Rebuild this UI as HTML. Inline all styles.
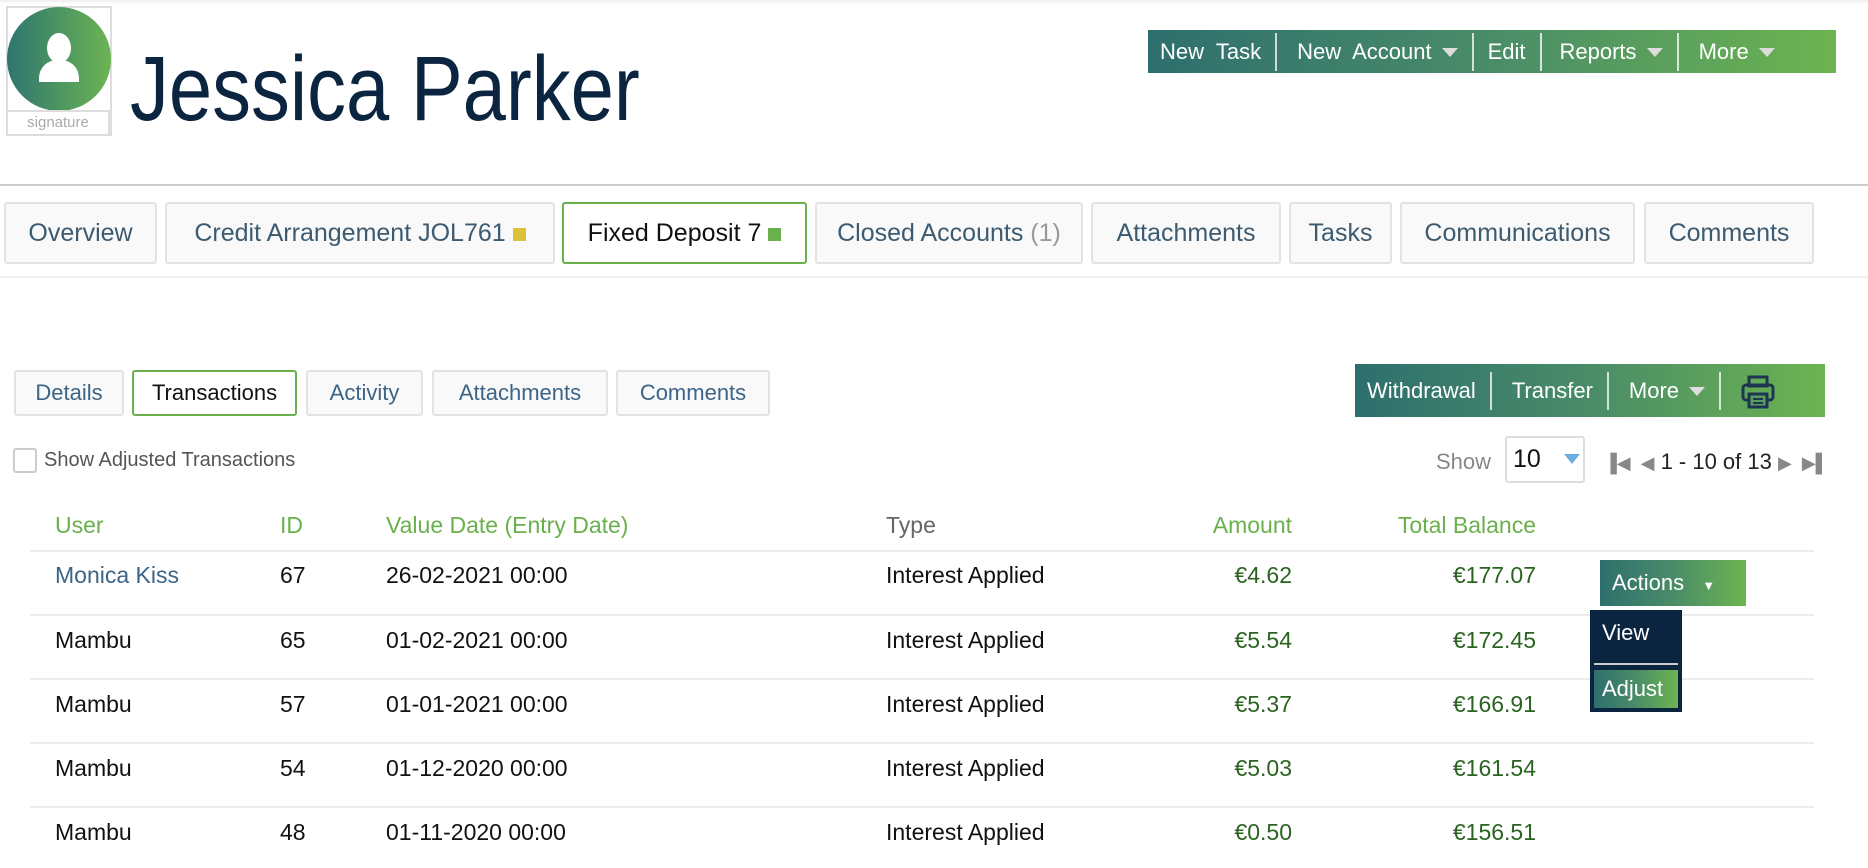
<!DOCTYPE html>
<html><head><meta charset="utf-8"><style>
*{box-sizing:border-box;margin:0;padding:0}
body{width:1868px;height:868px;background:#fff;font-family:"Liberation Sans",sans-serif;position:relative;overflow:hidden}
.a{position:absolute;white-space:nowrap}
.g{background:linear-gradient(90deg,#2e6f6e,#4a8c68 50%,#6cb450)}
.tab{position:absolute;top:202px;height:62px;border:2px solid #e3e3e3;border-radius:3px;background:#f9f9f9;color:#3c5a70;font-size:25px;line-height:58px;text-align:center}
.st{position:absolute;top:370px;height:46px;border:2px solid #e3e3e3;border-radius:3px;background:#f9f9f9;color:#3c6488;font-size:22px;line-height:42px;text-align:center}
.bar{display:flex;align-items:center;color:#fff}
.bar span{padding:0 14px;border-right:2px solid rgba(255,255,255,.75);line-height:38px}
.bar span:last-child{border-right:none}
.tri{display:inline-block;width:0;height:0;border-left:8px solid transparent;border-right:8px solid transparent;border-top:9px solid #ddd;margin-left:10px;vertical-align:middle}
.h{position:absolute;top:512px;font-size:23px;color:#6ab04c}
.c{position:absolute;font-size:23px;color:#111}
.r{text-align:right}
.amt{color:#2a6420}
.line{position:absolute;left:30px;width:1784px;height:2px;background:#ebebeb}
</style></head><body>
<div class="a" style="left:0;top:0;width:1868px;height:4px;background:linear-gradient(#eee,#fff)"></div>
<div class="a" style="left:6px;top:6px;width:106px;height:130px;border:2px solid #ddd"></div>
<div class="a" style="left:7px;top:7px;width:104px;height:104px;border-radius:50%;background:linear-gradient(90deg,#2e7570,#6cb452)"></div>
<div class="a" style="left:47px;top:33px;width:24px;height:30px;border-radius:50%;background:#fff"></div>
<div class="a" style="left:39px;top:60px;width:40px;height:22px;border-radius:18px 18px 0 0;background:#fff"></div>
<div class="a" style="left:6px;top:110px;width:104px;height:26px;border:2px solid #ddd;color:#aaa;font-size:15px;text-align:center;line-height:22px">signature</div>
<div class="a" style="left:130px;top:34px;font-size:92px;color:#0b2440;transform:scaleX(.845);transform-origin:left;line-height:110px">Jessica Parker</div>
<div class="a g bar" style="left:1148px;top:30px;width:688px;height:43px;font-size:22px;padding-left:0">
<span style="padding-left:12px">New&nbsp; Task</span><span style="padding-left:20px">New&nbsp; Account<i class="tri"></i></span><span>Edit</span><span style="padding-left:18px">Reports<i class="tri"></i></span><span style="padding-left:20px">More<i class="tri"></i></span>
</div>
<div class="a" style="left:0;top:184px;width:1868px;height:2px;background:#ccc"></div>
<div class="tab" style="left:4px;width:153px">Overview</div>
<div class="tab" style="left:165px;width:390px">Credit Arrangement JOL761 <span style="display:inline-block;width:13px;height:13px;background:#dcc23a"></span></div>
<div class="tab" style="left:562px;width:245px;border-color:#6ab04c;color:#111;background:#fff">Fixed Deposit 7 <span style="display:inline-block;width:13px;height:13px;background:#6ab04c"></span></div>
<div class="tab" style="left:815px;width:268px">Closed Accounts <span style="color:#999">(1)</span></div>
<div class="tab" style="left:1091px;width:190px">Attachments</div>
<div class="tab" style="left:1289px;width:103px">Tasks</div>
<div class="tab" style="left:1400px;width:235px">Communications</div>
<div class="tab" style="left:1644px;width:170px">Comments</div>
<div class="a" style="left:0;top:276px;width:1868px;height:2px;background:#f0f1ea"></div>
<div class="st" style="left:14px;width:110px">Details</div>
<div class="st" style="left:132px;width:165px;border-color:#6ab04c;color:#111;background:#fff">Transactions</div>
<div class="st" style="left:306px;width:117px">Activity</div>
<div class="st" style="left:432px;width:176px">Attachments</div>
<div class="st" style="left:616px;width:154px">Comments</div>
<div class="a g bar" style="left:1355px;top:364px;width:470px;height:53px;font-size:22px">
<span style="padding-left:12px;padding-right:14px">Withdrawal</span><span style="padding-left:20px;padding-right:14px">Transfer</span><span style="padding-left:20px;padding-right:14px">More<i class="tri"></i></span><span style="padding-left:20px;border:none">
<svg width="34" height="34" viewBox="0 0 34 34" style="vertical-align:middle"><rect x="8" y="2" width="18" height="9" fill="none" stroke="#1e3552" stroke-width="3"/><rect x="2" y="10" width="30" height="15" rx="3" fill="none" stroke="#1e3552" stroke-width="3"/><rect x="8" y="19" width="18" height="13" fill="#5a9c5f" stroke="#1e3552" stroke-width="3"/><line x1="12" y1="24" x2="22" y2="24" stroke="#1e3552" stroke-width="2"/><line x1="12" y1="28" x2="22" y2="28" stroke="#1e3552" stroke-width="2"/></svg></span>
</div>
<div class="a" style="left:13px;top:448px;width:24px;height:25px;border:2px solid #ccc;border-radius:3px"></div>
<div class="a" style="left:44px;top:448px;font-size:20px;color:#555;line-height:24px">Show Adjusted Transactions</div>
<div class="a" style="left:1436px;top:449px;font-size:22px;color:#888">Show</div>
<div class="a" style="left:1505px;top:436px;width:80px;height:47px;border:2px solid #ddd;border-radius:3px;font-size:25px;padding-left:6px;line-height:43px;color:#111">10</div>
<div class="a" style="left:1564px;top:454px;width:0;height:0;border-left:8px solid transparent;border-right:8px solid transparent;border-top:10px solid #6aaee0"></div>
<div class="a" style="left:1604px;top:449px;font-size:22px;color:#222"><span style="color:#888;font-size:18px">▐◀&nbsp; ◀</span> 1 - 10 of 13 <span style="color:#888;font-size:18px">▶&nbsp; ▶▌</span></div>
<div class="h" style="left:55px">User</div>
<div class="h" style="left:280px">ID</div>
<div class="h" style="left:386px">Value Date (Entry Date)</div>
<div class="h" style="left:886px;color:#666">Type</div>
<div class="h r" style="left:1100px;width:192px">Amount</div>
<div class="h r" style="left:1300px;width:236px">Total Balance</div>
<div class="line" style="top:550px"></div>
<div class="line" style="top:614px"></div>
<div class="line" style="top:678px"></div>
<div class="line" style="top:742px"></div>
<div class="line" style="top:806px"></div>
<div class="c" style="left:55px;top:562px;color:#3c6488">Monica Kiss</div><div class="c" style="left:280px;top:562px">67</div><div class="c" style="left:386px;top:562px">26-02-2021 00:00</div><div class="c" style="left:886px;top:562px">Interest Applied</div><div class="c r amt" style="left:1100px;width:192px;top:562px">€4.62</div><div class="c r amt" style="left:1300px;width:236px;top:562px">€177.07</div>
<div class="c" style="left:55px;top:627px">Mambu</div><div class="c" style="left:280px;top:627px">65</div><div class="c" style="left:386px;top:627px">01-02-2021 00:00</div><div class="c" style="left:886px;top:627px">Interest Applied</div><div class="c r amt" style="left:1100px;width:192px;top:627px">€5.54</div><div class="c r amt" style="left:1300px;width:236px;top:627px">€172.45</div>
<div class="c" style="left:55px;top:691px">Mambu</div><div class="c" style="left:280px;top:691px">57</div><div class="c" style="left:386px;top:691px">01-01-2021 00:00</div><div class="c" style="left:886px;top:691px">Interest Applied</div><div class="c r amt" style="left:1100px;width:192px;top:691px">€5.37</div><div class="c r amt" style="left:1300px;width:236px;top:691px">€166.91</div>
<div class="c" style="left:55px;top:755px">Mambu</div><div class="c" style="left:280px;top:755px">54</div><div class="c" style="left:386px;top:755px">01-12-2020 00:00</div><div class="c" style="left:886px;top:755px">Interest Applied</div><div class="c r amt" style="left:1100px;width:192px;top:755px">€5.03</div><div class="c r amt" style="left:1300px;width:236px;top:755px">€161.54</div>
<div class="c" style="left:55px;top:819px">Mambu</div><div class="c" style="left:280px;top:819px">48</div><div class="c" style="left:386px;top:819px">01-11-2020 00:00</div><div class="c" style="left:886px;top:819px">Interest Applied</div><div class="c r amt" style="left:1100px;width:192px;top:819px">€0.50</div><div class="c r amt" style="left:1300px;width:236px;top:819px">€156.51</div>
<div class="a g" style="left:1600px;top:560px;width:146px;height:46px;color:#fff;font-size:22px;line-height:46px;padding-left:12px">Actions <span style="font-size:13px;margin-left:12px">▼</span></div>
<div class="a" style="left:1590px;top:610px;width:92px;height:102px;background:#0b2440"></div>
<div class="a" style="left:1602px;top:620px;color:#fff;font-size:22px">View</div>
<div class="a" style="left:1594px;top:663px;width:84px;height:2px;background:#ccc"></div>
<div class="a g" style="left:1594px;top:670px;width:84px;height:38px;color:#fff;font-size:22px;line-height:38px;padding-left:8px">Adjust</div>
</body></html>
